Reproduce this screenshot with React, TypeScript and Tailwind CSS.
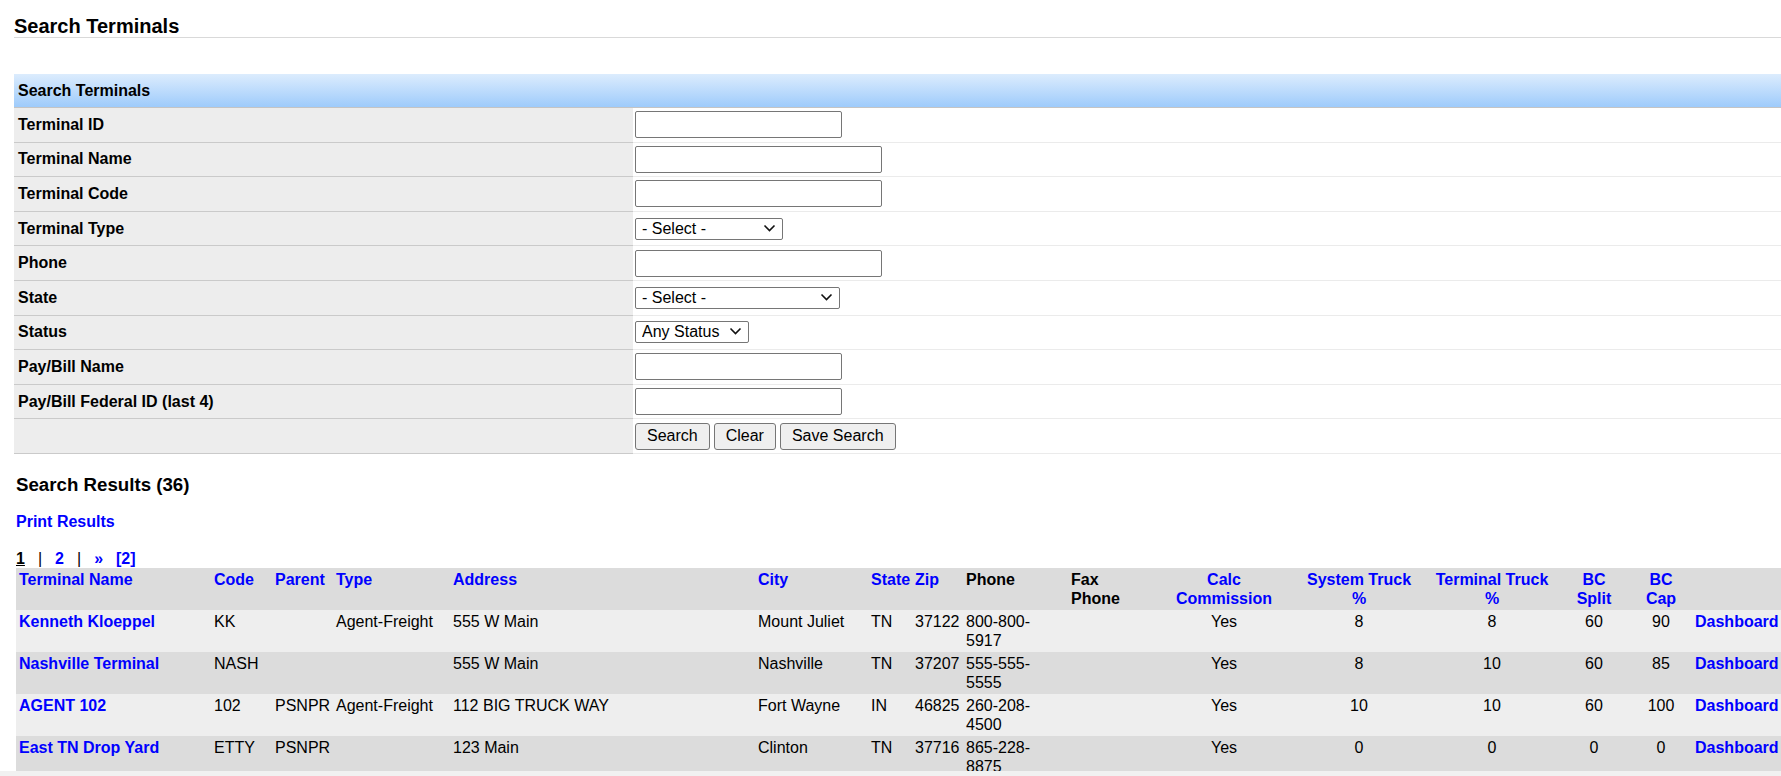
import { Fragment } from 'react';

type Field = {
  label: string;
  kind: 'text' | 'select' | 'buttons';
  width?: string;
  placeholder?: string;
};

const fields: Field[] = [
  { label: 'Terminal ID', kind: 'text', width: 'w-[207px]' },
  { label: 'Terminal Name', kind: 'text', width: 'w-[247px]' },
  { label: 'Terminal Code', kind: 'text', width: 'w-[247px]' },
  { label: 'Terminal Type', kind: 'select', width: 'w-[148px]', placeholder: '- Select -' },
  { label: 'Phone', kind: 'text', width: 'w-[247px]' },
  { label: 'State', kind: 'select', width: 'w-[205px]', placeholder: '- Select -' },
  { label: 'Status', kind: 'select', width: 'w-[114px]', placeholder: 'Any Status' },
  { label: 'Pay/Bill Name', kind: 'text', width: 'w-[207px]' },
  { label: 'Pay/Bill Federal ID (last 4)', kind: 'text', width: 'w-[207px]' },
  { label: '', kind: 'buttons' },
];

type Terminal = {
  name: string;
  code: string;
  parent: string;
  type: string;
  address: string;
  city: string;
  state: string;
  zip: string;
  phone: string;
  fax: string;
  calc: string;
  systemTruck: number;
  terminalTruck: number;
  bcSplit: number;
  bcCap: number;
};

const terminals: Terminal[] = [
  { name: 'Kenneth Kloeppel', code: 'KK', parent: '', type: 'Agent-Freight', address: '555 W Main', city: 'Mount Juliet', state: 'TN', zip: '37122', phone: '800-800-5917', fax: '', calc: 'Yes', systemTruck: 8, terminalTruck: 8, bcSplit: 60, bcCap: 90 },
  { name: 'Nashville Terminal', code: 'NASH', parent: '', type: '', address: '555 W Main', city: 'Nashville', state: 'TN', zip: '37207', phone: '555-555-5555', fax: '', calc: 'Yes', systemTruck: 8, terminalTruck: 10, bcSplit: 60, bcCap: 85 },
  { name: 'AGENT 102', code: '102', parent: 'PSNPR', type: 'Agent-Freight', address: '112 BIG TRUCK WAY', city: 'Fort Wayne', state: 'IN', zip: '46825', phone: '260-208-4500', fax: '', calc: 'Yes', systemTruck: 10, terminalTruck: 10, bcSplit: 60, bcCap: 100 },
  { name: 'East TN Drop Yard', code: 'ETTY', parent: 'PSNPR', type: '', address: '123 Main', city: 'Clinton', state: 'TN', zip: '37716', phone: '865-228-8875', fax: '', calc: 'Yes', systemTruck: 0, terminalTruck: 0, bcSplit: 0, bcCap: 0 },
];

// phone numbers break after the second dash, like the narrow column does
function Phone({ value }: { value: string }) {
  const cut = value.lastIndexOf('-') + 1;
  return (
    <>
      {value.slice(0, cut)}
      <br />
      {value.slice(cut)}
    </>
  );
}

function SelectBox({ width, placeholder }: { width?: string; placeholder?: string }) {
  return (
    <div className={`relative ${width}`}>
      <select className="w-full h-[22px] appearance-none border border-[#767676] rounded-[2px] bg-white pl-[6px] text-[16px] text-black leading-[20px]">
        <option>{placeholder}</option>
      </select>
      <svg
        width="13"
        height="8"
        viewBox="0 0 13 8"
        className="absolute right-[7px] top-[7px] pointer-events-none"
      >
        <path d="M1.5 1.5 L6.5 6.5 L11.5 1.5" fill="none" stroke="#111" strokeWidth="1.6" />
      </svg>
    </div>
  );
}

const btn = 'h-[27px] px-[11px] bg-[#efefef] border border-[#767676] rounded-[3px] text-[16px] text-black leading-none';
const th = 'align-top px-[3px] pt-[3px] font-bold leading-[18.4px]';
const td = 'align-top px-[3px] pt-[3px] leading-[18.4px]';

export default function App() {
  return (
    <div className="w-[1781px] h-[776px] flex flex-col overflow-hidden bg-white text-black text-[16px] font-['Liberation_Sans',Arial,sans-serif]">
      <div className="flex-1 overflow-hidden pl-[14px]">
        <div className="w-[1767px]">
          <h1 className="pt-[15px] text-[20px] font-bold leading-[22px] border-b border-[#d9d9d9]">
            Search Terminals
          </h1>

          <div className="mt-[36px]">
            <div className="h-[34px] flex items-center pl-[4px] font-bold bg-linear-to-b from-[#dcecfd] to-[#9ecbfb] border-b border-[#c4c4c4]">
              Search Terminals
            </div>
            {fields.map((f, i) => (
              <div key={i} className="grid grid-cols-[619px_1fr] h-[34.6px]">
                <div className="flex items-center pl-[4px] font-bold bg-[#ededed] border-b border-[#cacaca]">
                  {f.label}
                </div>
                <div className="flex items-center pl-[2px] border-b border-[#ebebeb]">
                  {f.kind === 'text' && (
                    <input
                      type="text"
                      className={`${f.width} h-[27px] border border-[#767676] rounded-[2px] bg-white px-[2px]`}
                    />
                  )}
                  {f.kind === 'select' && <SelectBox width={f.width} placeholder={f.placeholder} />}
                  {f.kind === 'buttons' && (
                    <div className="flex gap-[4px]">
                      <button className={btn}>Search</button>
                      <button className={btn}>Clear</button>
                      <button className={btn}>Save Search</button>
                    </div>
                  )}
                </div>
              </div>
            ))}
          </div>

          <h2 className="mt-[20px] pl-[2px] text-[18.7px] font-bold leading-[21.5px]">Search Results (36)</h2>

          <a className="block mt-[18px] pl-[2px] w-fit font-bold text-[#0000ff] leading-[18.4px]">Print Results</a>

          <div className="mt-[18px] pl-[2px] flex gap-[13px] leading-[18.4px] font-bold">
            <span className="underline">1</span>
            <span className="font-normal">|</span>
            <a className="text-[#0000ff]">2</a>
            <span className="font-normal">|</span>
            <a className="text-[#0000ff]">»</a>
            <a className="text-[#0000ff]">[2]</a>
          </div>

          <table className="ml-[2px] table-fixed border-collapse w-[1784px]">
            <colgroup>
              <col className="w-[195px]" />
              <col className="w-[61px]" />
              <col className="w-[61px]" />
              <col className="w-[117px]" />
              <col className="w-[305px]" />
              <col className="w-[113px]" />
              <col className="w-[44px]" />
              <col className="w-[51px]" />
              <col className="w-[105px]" />
              <col className="w-[90px]" />
              <col className="w-[132px]" />
              <col className="w-[138px]" />
              <col className="w-[128px]" />
              <col className="w-[76px]" />
              <col className="w-[58px]" />
              <col className="w-[110px]" />
            </colgroup>
            <thead>
              <tr className="h-[42px] bg-[#dcdcdc] text-[#0000ff]">
                <th className={`${th} text-left`}>Terminal Name</th>
                <th className={`${th} text-left`}>Code</th>
                <th className={`${th} text-left`}>Parent</th>
                <th className={`${th} text-left`}>Type</th>
                <th className={`${th} text-left`}>Address</th>
                <th className={`${th} text-left`}>City</th>
                <th className={`${th} text-left`}>State</th>
                <th className={`${th} text-left`}>Zip</th>
                <th className={`${th} text-left text-black`}>Phone</th>
                <th className={`${th} text-left text-black`}>Fax<br />Phone</th>
                <th className={`${th} text-center`}>Calc<br />Commission</th>
                <th className={`${th} text-center`}>System Truck<br />%</th>
                <th className={`${th} text-center`}>Terminal Truck<br />%</th>
                <th className={`${th} text-center`}>BC<br />Split</th>
                <th className={`${th} text-center`}>BC<br />Cap</th>
                <th className={th}></th>
              </tr>
            </thead>
            <tbody>
              {terminals.map((t, i) => (
                <tr key={t.code} className={i % 2 === 0 ? 'h-[42px] bg-[#eeeeee]' : 'h-[42px] bg-[#dcdcdc]'}>
                  <td className={`${td} font-bold text-[#0000ff]`}>{t.name}</td>
                  <td className={td}>{t.code}</td>
                  <td className={td}>{t.parent}</td>
                  <td className={td}>{t.type}</td>
                  <td className={td}>{t.address}</td>
                  <td className={td}>{t.city}</td>
                  <td className={td}>{t.state}</td>
                  <td className={td}>{t.zip}</td>
                  <td className={td}><Phone value={t.phone} /></td>
                  <td className={td}>{t.fax}</td>
                  <td className={`${td} text-center`}>{t.calc}</td>
                  <td className={`${td} text-center`}>{t.systemTruck}</td>
                  <td className={`${td} text-center`}>{t.terminalTruck}</td>
                  <td className={`${td} text-center`}>{t.bcSplit}</td>
                  <td className={`${td} text-center`}>{t.bcCap}</td>
                  <td className={`${td} pl-[5px] font-bold text-[#0000ff]`}>Dashboard</td>
                </tr>
              ))}
              {[0, 1].map(n => (
                <Fragment key={n}>
                  <tr className={n === 0 ? 'h-[42px] bg-[#eeeeee]' : 'h-[42px] bg-[#dcdcdc]'}>
                    <td colSpan={16}></td>
                  </tr>
                </Fragment>
              ))}
            </tbody>
          </table>
        </div>
      </div>
      <div className="h-[5px] shrink-0 bg-[#f1f1f1]" />
    </div>
  );
}
